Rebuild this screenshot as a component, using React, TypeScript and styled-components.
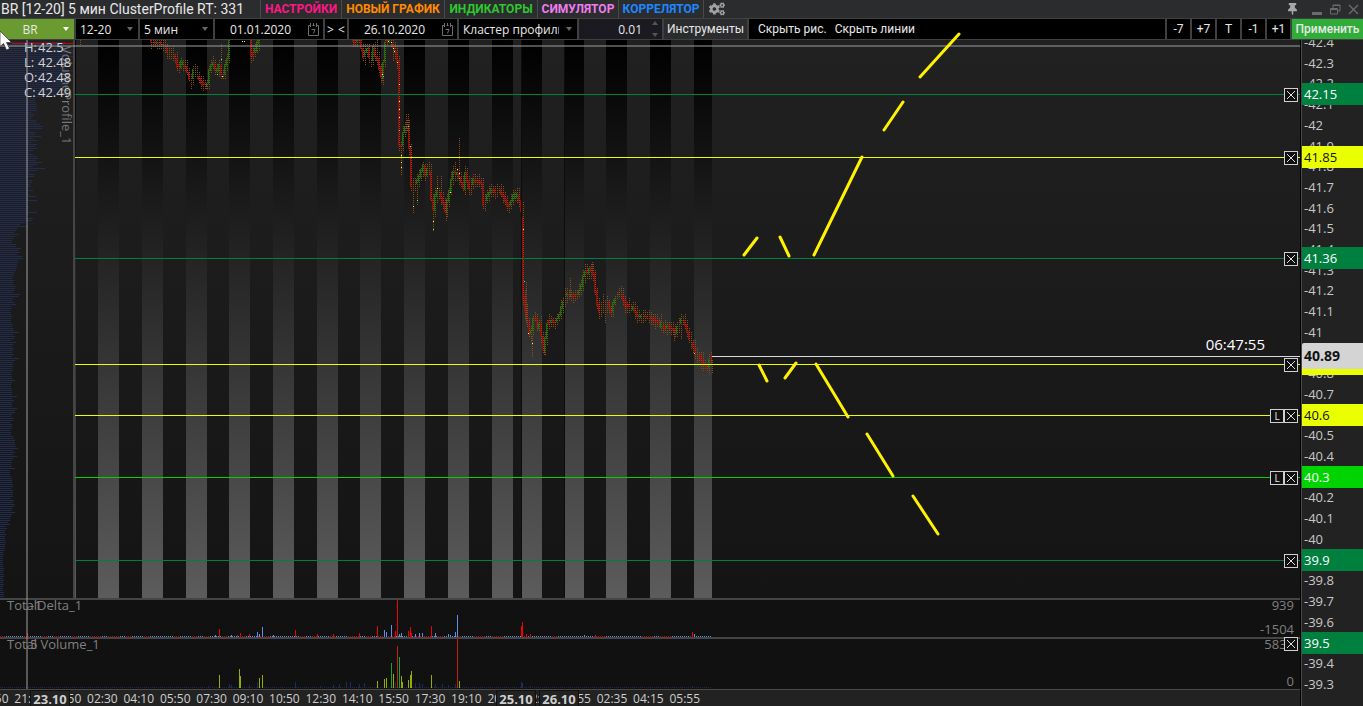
import React from "react";
import styled, { createGlobalStyle } from "styled-components";
import { FaCogs, FaThumbtack } from "react-icons/fa";

const GlobalStyle = createGlobalStyle`
  * { box-sizing: border-box; }
  body { margin: 0; background: #151515; }
  button, input, select { font: inherit; color: inherit; margin: 0; padding: 0; border: 0; background: none; border-radius: 0; }
`;

const Page = styled.div`
  min-height: 100vh;
  display: flex;
  flex-direction: column;
  overflow: hidden;
  position: relative;
  color: #e8e8e8;
  font-family: "Open Sans", "Noto Sans", sans-serif;
  font-size: 12px;
`;

/* ---------- title bar ---------- */
const TitleBar = styled.header`
  display: flex;
  height: 18px;
  background: #2b2c2e;
`;
const Title = styled.h1`
  margin: 0;
  width: 260px;
  padding-left: 1px;
  font-family: Roboto, "Open Sans", sans-serif;
  font-size: 14px;
  font-weight: 400;
  line-height: 18px;
  white-space: nowrap;
`;
const Tabs = styled.nav`
  display: flex;
  flex: 1;
`;
const Tab = styled.button<{ $color: string; $width: number }>`
  width: ${(p) => p.$width}px;
  border-left: 1px solid #4a4a4c;
  color: ${(p) => p.$color};
  font-family: Roboto, "Open Sans", sans-serif;
  font-size: 12px;
  font-weight: 700;
  line-height: 18px;
  text-align: center;
  white-space: nowrap;
`;
const GearButton = styled.button`
  display: flex;
  align-items: center;
  padding-left: 5px;
  border-left: 1px solid #4a4a4c;
  color: #a2a2a2;
`;
const WindowControls = styled.div`
  display: flex;
  align-items: center;
  gap: 7px;
  padding-right: 4px;
  color: #6c6c6e;
`;
const WindowButton = styled.button<{ $bright?: boolean }>`
  display: flex;
  width: 11px;
  color: ${(p) => (p.$bright ? "#a8a8a8" : "#6c6c6e")};
`;

/* ---------- toolbar ---------- */
const Toolbar = styled.div`
  display: flex;
  gap: 2px;
  height: 22px;
  padding: 1px 0;
  background: #404040;
`;
const Cell = styled.div<{ $width: number; $bg?: string }>`
  display: flex;
  align-items: center;
  gap: 6px;
  width: ${(p) => p.$width}px;
  padding: 0 4px;
  background: ${(p) => p.$bg || "#000"};
`;
const Select = styled.select<{ $center?: boolean }>`
  appearance: none;
  flex: 1;
  min-width: 0;
  height: 20px;
  outline: 0;
  text-align: ${(p) => (p.$center ? "center" : "left")};
  text-align-last: ${(p) => (p.$center ? "center" : "left")};
`;
const Field = styled.input<{ $align: string }>`
  flex: 1;
  min-width: 0;
  height: 20px;
  outline: 0;
  text-align: ${(p) => p.$align};
`;
const IconButton = styled.button`
  display: flex;
`;
const ShiftGroup = styled.div`
  display: flex;
  width: 22px;
  background: #000;
`;
const ShiftButton = styled.button`
  flex: 1;
  text-align: center;
`;
const ToolButton = styled.button<{ $width: number; $bg?: string; $bold?: boolean }>`
  width: ${(p) => p.$width}px;
  background: ${(p) => p.$bg || "#000"};
  font-family: Roboto, "Open Sans", sans-serif;
  font-size: 12px;
  font-weight: ${(p) => (p.$bold ? 500 : 400)};
  line-height: 20px;
  text-align: center;
  white-space: nowrap;
`;
const Links = styled.div`
  display: flex;
  flex: 1;
  gap: 8px;
  padding-left: 9px;
  background: #000;
`;
const LinkButton = styled.button`
  font-family: Roboto, "Open Sans", sans-serif;
  font-size: 12px;
  line-height: 20px;
  white-space: nowrap;
`;

/* ---------- workspace ---------- */
const Workspace = styled.main`
  display: flex;
  flex: 1;
  min-height: 400px;
`;
const Plot = styled.section`
  position: relative;
  z-index: 1;
  display: flex;
  flex: 1;
  flex-direction: column;
  min-width: 0;
  border-right: 1px solid #000;
`;
const Chart = styled.svg`
  display: block;
  width: 100%;
  flex: 1 1 0;
  min-height: 0;
  overflow: visible;
`;
const SubPanel = styled.div<{ $height: number }>`
  position: relative;
  height: ${(p) => p.$height}px;
  border-top: 2px solid #454545;
  background: #111;
  color: #808080;
  display: flex;
`;
const PanelTitle = styled.span`
  position: absolute;
  left: 7px;
  top: -3px;
  font-size: 13px;
  line-height: 16px;
`;
const PanelScale = styled.div`
  position: absolute;
  top: -2px;
  right: 6px;
  bottom: 1px;
  display: flex;
  flex-direction: column;
  justify-content: space-between;
  text-align: right;
  font-size: 13px;
  line-height: 14px;
`;
const HoverValue = styled(PanelTitle)`
  left: 30px;
`;
const TimeAxis = styled.div`
  position: relative;
  height: 17px;
  border-top: 1px solid #4a4a4a;
  background: #222;
  color: #cfcfcf;
  overflow: hidden;
`;
const TimeTicks = styled.div`
  display: grid;
  grid-template-columns: repeat(20, 1fr);
  width: 56%;
  margin-left: -25px;
  text-align: center;
  line-height: 18px;
`;
const DateBadge = styled.strong<{ $left: number }>`
  position: absolute;
  left: ${(p) => p.$left}px;
  top: 0;
  width: 40px;
  height: 16px;
  border: 1px solid #111;
  border-bottom: 0;
  background: #222;
  font-size: 13px;
  line-height: 16px;
  text-align: center;
`;
const Ohlc = styled.dl`
  position: absolute;
  left: 24px;
  top: 0;
  margin: 0;
  color: #d4d4d4;
  font-size: 13px;
  line-height: 15px;
  white-space: nowrap;
  display: grid;
  grid-template-columns: 14px auto;
`;
const OhlcName = styled.dt`
  width: 12px;
`;
const OhlcValue = styled.dd`
  margin: 0;
`;
const ProfileTitle = styled.span`
  position: absolute;
  left: 59px;
  top: 6px;
  writing-mode: vertical-rl;
  color: #777;
  font-size: 13px;
  line-height: 15px;
`;
const CrossHorizontal = styled.div`
  position: absolute;
  left: 0;
  right: 0;
  top: 5px;
  height: 2px;
  background: rgba(160, 160, 160, 0.5);
`;
const CrossVertical = styled.div`
  position: absolute;
  left: 26px;
  top: 0;
  bottom: 17px;
  width: 2px;
  background: rgba(160, 160, 160, 0.5);
`;
const LevelRow = styled.div`
  position: absolute;
  left: 75px;
  right: 0;
  display: flex;
  align-items: center;
  height: 14px;
  margin-top: -6px;
`;
const LevelLine = styled.div<{ $color: string }>`
  flex: 1;
  height: 1px;
  margin-bottom: 1px;
  background: ${(p) => p.$color};
`;
const LevelStub = styled(LevelLine)`
  flex: 0 0 2px;
`;
const LevelButton = styled.button`
  display: flex;
  align-items: center;
  justify-content: center;
  width: 14px;
  height: 14px;
  border: 1px solid #d0d0d0;
  background: #111;
  font-size: 10px;
  line-height: 12px;
`;
const LastPriceRow = styled.div`
  position: absolute;
  left: 712px;
  right: 0;
  height: 21px;
  margin-top: -19px;
  padding-right: 35px;
  border-bottom: 1px solid #dadada;
  color: #fff;
  font-size: 15px;
  line-height: 16px;
  text-align: right;
`;

/* ---------- price axis ---------- */
const PriceAxis = styled.aside`
  position: relative;
  display: flex;
  width: 62px;
  border-left: 1px solid #4a4a4a;
  background: #222;
  overflow: hidden;
`;
const PriceTicks = styled.div`
  display: flex;
  flex: 1;
  flex-direction: column;
  justify-content: space-between;
  margin-top: -6px;
  padding: 0 0 14px 2px;
  color: #c8c8c8;
  font-size: 13px;
  line-height: 16px;
`;
const PriceBadge = styled.div<{ $bg: string; $dark?: boolean }>`
  position: absolute;
  left: 0;
  right: 0;
  height: 22px;
  margin-top: -11px;
  padding-left: 2px;
  background: ${(p) => p.$bg};
  color: ${(p) => (p.$dark ? "#111" : "#fff")};
  font-size: 13px;
  line-height: 22px;
`;
const LastPriceBadge = styled(PriceBadge)`
  height: 26px;
  margin-top: -12px;
  border-radius: 2px 0 0 2px;
  font-size: 14px;
  font-weight: 700;
  line-height: 26px;
`;
const Pointer = styled.svg`
  position: absolute;
  left: 0;
  top: 30px;
  z-index: 3;
`;

/* ---------- data ---------- */
const WORK_HEIGHT = 666;
const priceTop = (price: number) =>
  `${((54.45 + (42.15 - price) * 207) / WORK_HEIGHT) * 100}%`;

const ticks = Array.from({ length: 32 }, (_, i) => `-${Number((42.4 - i * 0.1).toFixed(1))}`);

const GREEN = "#00803f";
const YELLOW = "#eaff00";
const LIME = "#00d400";

interface Level {
  price: number;
  color: string;
  dark?: boolean;
  locked?: boolean;
  hidden?: boolean;
  noLabel?: boolean;
}
const levels: Level[] = [
  { price: 42.15, color: GREEN },
  { price: 41.85, color: YELLOW, dark: true },
  { price: 41.36, color: GREEN },
  { price: 40.85, color: YELLOW, noLabel: true },
  { price: 40.6, color: YELLOW, dark: true, locked: true },
  { price: 40.3, color: LIME, locked: true },
  { price: 39.9, color: GREEN },
  { price: 39.5, color: GREEN, hidden: true },
];

const times = [
  "19:50", "21:30", "00:50", "02:30", "04:10", "05:50", "07:30", "09:10", "10:50", "12:30",
  "14:10", "15:50", "17:30", "19:10", "20:50", "22:30", "00:55", "02:35", "04:15", "05:55",
];

const stripes: [number, number][] = [
  [75, 1], [98, 21], [142, 21], [186, 21], [229, 21], [273, 21], [317, 21], [360, 21], [404, 21],
  [448, 21], [492, 21], [522, 20], [564, 20], [606, 21], [650, 21], [694, 18],
];

/* price path: x and y pairs, in chart units */
const paths: [number, number][][] = [
  [[150, 1], [157, 3], [164, 4], [167, 10], [172, 14], [176, 18], [179, 30], [182, 22], [187, 30], [191, 42], [194, 30], [199, 38], [204, 45], [208, 44], [211, 25], [214, 24], [217, 33], [220, 26], [223, 38], [226, 25], [228, 18], [230, 0]],
  [[250, 0], [252, 16], [256, 10], [259, 0]],
  [[352, 0], [355, 2], [360, 0], [363, 14], [365, 17], [367, 6], [370, 16], [372, 20], [374, 8], [376, 17], [378, 20], [380, 28], [382, 36], [384, 22], [386, 2], [390, 0], [393, 4], [396, 12], [398, 22], [399, 98], [401, 112], [403, 98], [405, 87], [408, 86], [410, 108], [412, 145], [413, 148], [416, 143], [419, 140], [421, 132], [424, 125], [426, 136], [429, 125], [431, 140], [433, 178], [435, 160], [437, 150], [440, 152], [443, 160], [446, 171], [449, 156], [452, 140], [454, 132], [457, 132], [460, 138], [464, 148], [466, 134], [470, 148], [474, 140], [478, 141], [482, 143], [484, 164], [488, 156], [492, 150], [496, 152], [500, 150], [504, 156], [508, 165], [511, 166], [514, 155], [517, 158], [519, 150], [521, 171]],
  [[522, 178], [523, 208], [524, 258], [526, 270], [529, 285], [531, 300], [533, 282], [535, 274], [538, 288], [541, 282], [543, 310], [545, 310], [547, 285], [550, 282], [553, 280], [556, 282], [560, 275], [563, 265], [566, 255], [570, 254], [574, 256], [578, 254], [582, 245], [585, 232], [588, 232], [591, 228], [594, 235], [597, 260], [600, 272], [604, 268], [608, 262], [612, 272], [615, 260], [618, 255], [622, 255], [626, 265], [630, 267], [634, 268], [637, 276], [642, 276], [648, 277], [654, 280], [660, 283], [664, 288], [668, 286], [672, 288], [676, 292], [679, 284], [683, 278], [686, 285], [690, 298], [693, 305], [696, 315], [700, 316], [703, 324], [708, 327], [711, 318]],
];

/* long shadows: x, top, bottom */
const shadows: [number, number, number][] = [
  [80, 0, 4], [191, 44, 49], [206, 45, 49], [221, 5, 30], [365, 10, 24], [377, 0, 24], [382, 30, 41], [393, 0, 20],
  [401, 102, 135], [406, 75, 92], [408, 75, 90], [413, 150, 172], [417, 146, 164], [433, 176, 190], [437, 136, 152], [441, 136, 156],
  [446, 160, 180], [455, 122, 140], [459, 98, 144], [523, 162, 205], [526, 243, 282], [532, 296, 316], [544, 308, 314],
  [551, 277, 285], [570, 239, 256], [592, 222, 230], [603, 255, 268], [605, 268, 283], [621, 247, 258], [637, 270, 283],
  [674, 290, 300], [681, 290, 298], [685, 274, 282], [712, 320, 333],
];

const sparks: [number, number, string][] = [
  [242, 1, "y"], [244, 1, "y"], [217, 34, "c"], [222, 36, "y"], [221, 19, "c"], [382, 34, "y"], [383, 36, "c"], [388, 1, "y"], [391, 2, "y"], [393, 8, "y"],
  [394, 11, "y"], [397, 22, "y"], [399, 44, "y"], [399, 61, "y"], [399, 69, "y"], [399, 77, "y"], [399, 90, "c"], [401, 115, "y"],
  [401, 122, "y"], [401, 127, "y"], [408, 86, "c"], [410, 106, "c"], [413, 166, "y"], [417, 160, "c"], [433, 181, "y"], [433, 189, "c"],
  [437, 148, "y"], [450, 152, "y"], [457, 129, "y"], [459, 133, "y"], [459, 138, "c"], [523, 189, "y"], [524, 241, "c"],
  [528, 293, "y"], [532, 303, "y"], [694, 313, "c"], [707, 324, "y"],
];

const noise = (n: number) => {
  const v = Math.sin(n * 12.9898) * 43758.5453;
  return v - Math.floor(v);
};

const buildCandles = () => {
  let up = "";
  let down = "";
  let range = "";
  paths.forEach((points) => {
    const at = (x: number) => {
      const i = Math.max(1, points.findIndex((p) => p[0] >= x));
      const [x0, y0] = points[i - 1];
      const [x1, y1] = points[i];
      return y0 + ((y1 - y0) * (x - x0)) / (x1 - x0);
    };
    const end = points[points.length - 1][0];
    for (let x = points[0][0]; x < end; x += 2) {
      const a = at(x);
      const b = at(Math.min(end, x + 2));
      const top = Math.max(0, Math.round(Math.min(a, b)) - Math.round(noise(x) * 2));
      const bottom = Math.round(Math.max(a, b)) + Math.round(noise(x + 7) * 2);
      const body = `M${x + 0.5} ${top}V${Math.max(bottom, top + 1)}`;
      if (noise(x + 21) > 0.25 || Math.abs(b - a) > 5) {
        if (b - a + (noise(x + 3) - 0.5) * 8 < 0) up += body;
        else down += body;
      }
      const reach = 1 + Math.round(noise(x + 11) * 5);
      const start = Math.max(0, top - reach);
      const finish = bottom + 1 + Math.round(noise(x + 5) * 5);
      for (let y = start - (start % 2); y <= finish; y += 2) {
        range += `M${x + 1} ${y + 0.5}h1`;
      }
    }
  });
  shadows.forEach(([x, top, bottom]) => {
    for (let y = top - (top % 2); y <= bottom; y += 2) range += `M${x} ${y + 0.5}h1`;
  });
  return { up, down, range };
};
const candles = buildCandles();

/* envelope of the horizontal volume profile: y, width */
const envelope: [number, number][] = [
  [0, 64], [30, 68], [54, 62], [57, 38], [65, 40], [76, 32], [86, 44], [90, 33], [106, 34], [110, 32], [128, 36], [138, 30],
  [148, 28], [152, 27], [158, 28], [170, 27], [178, 26], [186, 21], [192, 15], [204, 12], [210, 19], [226, 17],
  [236, 13], [250, 15], [262, 13], [270, 11], [284, 12], [292, 14], [300, 12], [314, 13], [324, 14], [330, 10],
  [350, 12], [364, 13], [376, 11], [390, 11], [404, 15], [414, 13], [424, 11], [440, 11], [450, 13], [466, 12], [478, 10],
  [484, 7], [496, 4], [502, 6], [510, 3], [526, 3], [536, 4], [550, 3], [557, 4],
];
const profile = (() => {
  let d = "";
  for (let y = 2; y < 558; y += 2) {
    const i = Math.max(1, envelope.findIndex((e) => e[0] >= y));
    const [y0, w0] = envelope[i - 1];
    const [y1, w1] = envelope[i];
    const w = w0 + ((w1 - w0) * (y - y0)) / (y1 - y0);
    const spike = noise(y) > 0.85 ? w * 0.3 : 0;
    d += `M0 ${y + 0.5}H${Math.min(73, Math.round(w * (0.88 + noise(y + 1) * 0.24) + spike))}`;
  }
  return d;
})();

const trendLines = [
  "M744 215L757 198", "M780 197L789 216", "M814 215L862 117", "M884 90L903 62", "M920 37L959 -6",
  "M759 325L767 341", "M785 338L796 323", "M816 324L848 377", "M867 394L893 436", "M913 456L938 494",
];

type Bar = [number, number, string];
const deltaBars: Bar[] = [
  [27, 4, "r"], [215, 2, "b"], [219, 8, "r"], [231, 2, "b"], [237, 2, "r"], [240, 4, "r"], [249, 3, "r"], [257, 5, "b"], [259, 3, "b"], [262, 10, "b"],
  [273, 2, "b"], [295, 7, "r"], [317, 3, "r"], [333, 3, "r"], [359, 4, "r"], [377, 11, "r"], [384, 7, "b"], [386, 5, "b"],
  [391, 12, "b"], [395, 6, "r"], [397, 37, "r"], [399, 3, "b"], [401, 4, "b"], [408, 6, "r"], [410, 10, "r"], [411, 4, "r"],
  [415, 3, "b"], [419, 4, "b"], [422, 4, "b"], [431, 11, "r"], [435, 4, "b"], [448, 3, "b"], [450, 2, "b"], [455, 5, "b"], [457, 22, "b"],
  [521, 11, "r"], [522, 15, "r"], [526, 3, "r"], [530, 3, "r"], [584, 2, "b"], [595, 2, "r"], [692, 5, "r"], [694, 3, "b"],
];
const volumeBars: Bar[] = [
  [208, 2, "n"], [219, 13, "y"], [229, 4, "n"], [231, 3, "n"], [239, 19, "y"], [240, 12, "y"], [249, 3, "n"], [257, 6, "n"], [259, 10, "y"], [262, 13, "y"],
  [295, 6, "n"], [320, 2, "n"], [333, 3, "n"], [339, 4, "n"], [346, 6, "n"], [350, 6, "n"], [359, 4, "n"], [364, 5, "n"], [377, 7, "y"], [384, 9, "y"], [386, 10, "y"], [391, 25, "g"],
  [393, 14, "y"], [395, 6, "n"], [397, 42, "d"], [399, 31, "g"], [401, 12, "y"], [402, 6, "y"], [408, 8, "y"], [410, 13, "y"],
  [411, 17, "y"], [415, 5, "n"], [419, 5, "n"], [422, 4, "n"], [431, 13, "y"], [435, 4, "n"], [442, 4, "n"], [448, 3, "n"], [455, 4, "n"], [457, 49, "d"], [459, 7, "y"], [521, 6, "n"], [522, 5, "n"],
  [530, 2, "n"], [692, 2, "n"],
];
const barColors: Record<string, string> = {
  r: "#f00000", b: "#5f8fe8", y: "#95ad00", g: "#1da32c", d: "#c22208", n: "#1d2c58",
};
const deltaDot = (i: number) => (noise(Math.floor(i / 3) + 0.3) > 0.65 ? "#e00000" : "#5f8fe8");
const volumeDot = () => "#1d2747";

/* ---------- parts ---------- */
const Caret = ({ light }: { light?: boolean }) => (
  <svg width="8" height="5" viewBox="0 0 8 5" aria-hidden>
    <path d="M1 0H7L4 4Z" fill={light ? "#fff" : "#666"} />
  </svg>
);
const CalendarIcon = () => (
  <svg width="11" height="13" viewBox="0 0 11 13" fill="none" stroke="#6e6e6e" aria-hidden>
    <path d="M2.5 2.5H.5V12.5H10.5V2.5H8.5M4.5 2.5H6.5M2.5 0V4M8.5 0V4M5.5 0V3" />
    <path d="M3.5 6.5H7L5.5 10.5" />
  </svg>
);
const Cross = () => (
  <svg width="10" height="10" viewBox="0 0 10 10" aria-hidden>
    <path d="M1 1L9 9M9 1L1 9" stroke="#e0e0e0" />
  </svg>
);

const DropDown = ({ label, value, width, bg, center }: { label: string; value: string; width: number; bg?: string; center?: boolean }) => (
  <Cell $width={width} $bg={bg}>
    <Select aria-label={label} defaultValue={value} $center={center}>
      <option>{value}</option>
    </Select>
    <Caret light={!!bg} />
  </Cell>
);

const DateCell = ({ label, value }: { label: string; value: string }) => (
  <Cell $width={108}>
    <Field aria-label={label} defaultValue={value} $align="center" />
    <IconButton aria-label={`${label}: календарь`}>
      <CalendarIcon />
    </IconButton>
  </Cell>
);

const Histogram = ({ bars, base, dots, height }: { bars: Bar[]; base: number; height: number; dots: (x: number) => string }) => (
  <Chart viewBox={`0 0 1300 ${height}`} preserveAspectRatio="none" shapeRendering="crispEdges" aria-hidden>
    {Array.from({ length: 356 }, (_, i) => (
      <rect key={i} x={i * 2} y={base - 1} width="1" height="1" fill={dots(i)} />
    ))}
    {bars.map(([x, h, c], i) => (
      <rect key={i} x={x} y={base - h} width="1" height={h} fill={barColors[c]} />
    ))}
  </Chart>
);

const Overlay = styled.svg`
  position: absolute;
  left: 0;
  top: 0;
  width: 100%;
  height: 100%;
  overflow: visible;
  pointer-events: none;
`;

const TrendLayer = () => (
  <Overlay viewBox="0 0 1300 666" preserveAspectRatio="none" aria-hidden>
    <path d={trendLines.join("")} stroke="#fff200" strokeWidth="3" strokeLinecap="round" fill="none" />
  </Overlay>
);

export default function App() {
  return (
    <Page>
      <GlobalStyle />
      <TitleBar>
        <Title>BR [12-20] 5 мин ClusterProfile RT: 331</Title>
        <Tabs>
          <Tab $width={81} $color="#ff1784">НАСТРОЙКИ</Tab>
          <Tab $width={103} $color="#ff8a00">НОВЫЙ ГРАФИК</Tab>
          <Tab $width={93} $color="#2fc62f">ИНДИКАТОРЫ</Tab>
          <Tab $width={81} $color="#f07cf0">СИМУЛЯТОР</Tab>
          <Tab $width={85} $color="#1e86ff">КОРРЕЛЯТОР</Tab>
          <GearButton aria-label="Параметры">
            <FaCogs size={16} />
          </GearButton>
        </Tabs>
        <WindowControls>
          <WindowButton $bright aria-label="Закрепить">
            <FaThumbtack size={12} />
          </WindowButton>
          <span />
          <WindowButton aria-label="Свернуть">
            <svg width="11" height="12" viewBox="0 0 11 12"><path d="M0 9H10V12H0Z" fill="currentColor" /></svg>
          </WindowButton>
          <WindowButton aria-label="Восстановить">
            <svg width="11" height="11" viewBox="0 0 11 11" fill="none" stroke="currentColor">
              <path d="M.5 4.5H7.5V10H.5ZM.5 5.5H7.5M3 4V1H10V7H8M3 1.5H10" />
            </svg>
          </WindowButton>
          <WindowButton aria-label="Закрыть">
            <svg width="11" height="11" viewBox="0 0 11 11"><path d="M1 1L10 10M10 1L1 10" stroke="currentColor" strokeWidth="1.4" /></svg>
          </WindowButton>
        </WindowControls>
      </TitleBar>

      <Toolbar>
        <DropDown label="Инструмент" value="BR" width={74} bg="#6a9b30" center />
        <DropDown label="Контракт" value="12-20" width={62} />
        <DropDown label="Период" value="5 мин" width={73} />
        <DateCell label="Начало" value="01.01.2020" />
        <ShiftGroup>
          <ShiftButton>&gt;</ShiftButton>
          <ShiftButton>&lt;</ShiftButton>
        </ShiftGroup>
        <DateCell label="Конец" value="26.10.2020" />
        <DropDown label="Тип графика" value="Кластер профиль" width={118} />
        <Cell $width={83} $bg="#1b1a20">
          <Field aria-label="Шаг цены" defaultValue="0.01" $align="right" />
          <svg width="10" height="16" viewBox="0 0 10 16" fill="#555" aria-hidden>
            <path d="M4 4L7 0L10 4ZM4 12L7 16L10 12Z" />
          </svg>
        </Cell>
        <ToolButton $width={83} $bg="#2b2c2e">Инструменты</ToolButton>
        <Links>
          <LinkButton>Скрыть рис.</LinkButton>
          <LinkButton>Скрыть линии</LinkButton>
        </Links>
        <ToolButton $width={23}>-7</ToolButton>
        <ToolButton $width={23}>+7</ToolButton>
        <ToolButton $width={23}>T</ToolButton>
        <ToolButton $width={23}>-1</ToolButton>
        <ToolButton $width={23}>+1</ToolButton>
        <ToolButton $width={71} $bg="#30ac38" $bold>Применить</ToolButton>
      </Toolbar>

      <Workspace>
        <Plot>
          <Chart viewBox="0 0 1300 558" preserveAspectRatio="none" aria-hidden>
            <defs>
              <linearGradient id="ground" x1="0" y1="0" x2="0" y2="1">
                <stop offset="0" stopColor="#212121" />
                <stop offset="1" stopColor="#141414" />
              </linearGradient>
              <linearGradient id="session" x1="0" y1="0" x2="0" y2="1">
                <stop offset="0" stopColor="#000" />
                <stop offset="1" stopColor="#5c5c5c" />
              </linearGradient>
            </defs>
            <g shapeRendering="crispEdges" fill="none">
              <rect width="1300" height="558" fill="url(#ground)" />
              {stripes.map(([x, w]) => (
                <rect key={x} x={x} y="0" width={w} height="558" fill="url(#session)" />
              ))}
              <path d={profile} stroke="#222c4e" />
              <path d="M12 3.5H74" stroke="#d00000" />
              <rect x="73" y="0" width="2" height="558" fill="#454545" />
              <path d={candles.down} stroke="#b40000" />
              <path d={candles.up} stroke="#008000" />
              <path d={candles.range} stroke="#8b4a1c" />
              {sparks.map(([x, y, c], i) => (
                <rect key={i} x={x} y={y} width="1" height="1" fill={c === "y" ? "#ffff30" : "#20ffc0"} />
              ))}
              <path d="M521.5 0V558M564.5 0V558" stroke="#0c0c0c" />
            </g>
          </Chart>
          <SubPanel $height={39}>
            <Histogram bars={deltaBars} base={37} height={37} dots={deltaDot} />
            <PanelTitle>TotalDelta_1</PanelTitle>
            <HoverValue>-1</HoverValue>
            <PanelScale><span>939</span><span>-1504</span></PanelScale>
          </SubPanel>
          <SubPanel $height={52}>
            <Histogram bars={volumeBars} base={49} height={50} dots={volumeDot} />
            <PanelTitle>Total Volume_1</PanelTitle>
            <HoverValue>5</HoverValue>
            <PanelScale><span>5838</span><span>0</span></PanelScale>
          </SubPanel>
          <TimeAxis>
            <TimeTicks>{times.map((t, i) => <span key={i}>{t}</span>)}</TimeTicks>
            <DateBadge $left={30}>23.10</DateBadge>
            <DateBadge $left={496}>25.10</DateBadge>
            <DateBadge $left={539}>26.10</DateBadge>
          </TimeAxis>

          <ProfileTitle>VolumeProfile_1</ProfileTitle>
          <Ohlc>
            <OhlcName>H:</OhlcName><OhlcValue>42.5</OhlcValue>
            <OhlcName>L:</OhlcName><OhlcValue>42.48</OhlcValue>
            <OhlcName>O:</OhlcName><OhlcValue>42.48</OhlcValue>
            <OhlcName>C:</OhlcName><OhlcValue>42.49</OhlcValue>
          </Ohlc>
          <CrossHorizontal />
          <CrossVertical />
          {levels.map((l) => (
            <LevelRow key={l.price} style={{ top: priceTop(l.price) }}>
              <LevelLine $color={l.hidden ? "transparent" : l.color} />
              {l.locked && <LevelButton aria-label={`Закрепить ${l.price}`}>L</LevelButton>}
              <LevelButton aria-label={`Удалить ${l.price}`}><Cross /></LevelButton>
              <LevelStub $color={l.hidden ? "transparent" : l.color} />
            </LevelRow>
          ))}
          <LastPriceRow style={{ top: priceTop(40.89) }}>06:47:55</LastPriceRow>
          <TrendLayer />
        </Plot>

        <PriceAxis>
          <PriceTicks>{ticks.map((t) => <span key={t}>{t}</span>)}</PriceTicks>
          {levels.map((l) => (
            <PriceBadge key={l.price} $bg={l.color} $dark={l.dark} style={{ top: priceTop(l.price) }}>
              {l.noLabel ? "" : l.price}
            </PriceBadge>
          ))}
          <LastPriceBadge $bg="#d4d4d4" $dark style={{ top: priceTop(40.89) }}>40.89</LastPriceBadge>
        </PriceAxis>
      </Workspace>

      <Pointer width="14" height="21" viewBox="0 0 14 21" aria-hidden>
        <path d="M0 1V16.500L3.500 13.500L6.500 20L9.500 18.500L6.500 12.500H11.500Z" fill="#fff" stroke="#333" strokeWidth=".7" />
      </Pointer>
    </Page>
  );
}
